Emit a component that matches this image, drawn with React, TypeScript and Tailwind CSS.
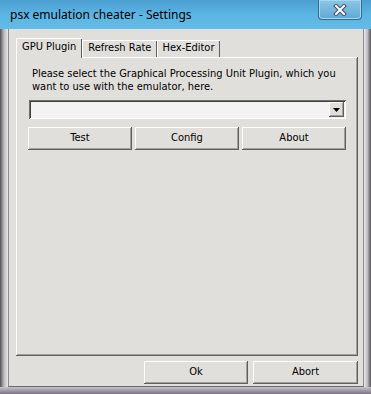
import React from "react";

const font = { fontFamily: '"DejaVu Sans Condensed", Tahoma, "Liberation Sans", sans-serif' };

const raised =
  "bg-[#e1dfdb] shadow-[inset_-1px_-1px_#5f5f5f,inset_1px_1px_#ffffff,inset_-2px_-2px_#a3a19d]";

function ClassicButton({ label }: { label: string }) {
  return (
    <button className={`${raised} w-full h-[23px] text-[11px] text-black flex items-center justify-center`}>
      {label}
    </button>
  );
}

function CloseGlyph() {
  return (
    <svg width="14" height="12" viewBox="0 0 14 12" aria-hidden="true">
      <path d="M3 2 L11 10 M11 2 L3 10" stroke="#3a4f66" strokeWidth="4" strokeLinecap="square" />
      <path d="M3 2 L11 10 M11 2 L3 10" stroke="#ffffff" strokeWidth="2" strokeLinecap="square" />
    </svg>
  );
}

export default function App() {
  return (
    <div
      className="w-[371px] h-[394px] flex flex-col overflow-hidden bg-[#cfcdd0]"
      style={font}
    >
      {/* Title bar */}
      <div className="h-[29px] flex items-start bg-gradient-to-b from-[#4b9fd0] via-[#5cb5e3] to-[#63bbe6]">
        <div
          className="pl-[10px] pt-[6px] text-[12px] text-black"
          style={{ fontFamily: '"Noto Sans", "Liberation Sans", sans-serif' }}
        >
          psx emulation cheater - Settings
        </div>
        <div className="ml-auto mr-[9px] w-[44px] h-[20px] rounded-b-[4px] border border-t-0 border-[#3d6a8c] bg-gradient-to-b from-[#8cc6e6] to-[#5da9d6] flex items-center justify-center shadow-[inset_0_0_0_1px_#a9d7ef]">
          <CloseGlyph />
        </div>
      </div>

      <div className="flex-1 flex">
        {/* left frame */}
        <div className="w-[8px] bg-gradient-to-r from-[#555357] via-[#bdbbbf] to-[#e9e8ea]" />

        {/* client area */}
        <div className="flex-1 flex flex-col bg-[#e1dfdb] border-l border-[#8d8b8e] border-r border-[#8d8b8e] border-b border-b-[#6b6870]">
          {/* tabs */}
          <div className="flex items-end pl-[7px] pt-[9px] text-[11px] text-black">
            <div className="h-[20px] px-[6px] flex items-center bg-[#e1dfdb] shadow-[inset_1px_1px_#ffffff,inset_-1px_0_#5f5f5f] relative z-10 -mb-[1px] pb-[1px]">
              GPU Plugin
            </div>
            <div className="h-[17px] px-[6px] flex items-center bg-[#e1dfdb] shadow-[inset_1px_1px_#ffffff,inset_-1px_0_#5f5f5f]">
              Refresh Rate
            </div>
            <div className="h-[17px] px-[5px] flex items-center bg-[#e1dfdb] shadow-[inset_1px_1px_#ffffff,inset_-1px_0_#5f5f5f]">
              Hex-Editor
            </div>
          </div>

          {/* tab panel */}
          <div className="ml-[7px] mr-[5px] h-[299px] bg-[#e1dfdb] shadow-[inset_-1px_-1px_#5f5f5f,inset_1px_1px_#ffffff,inset_-2px_-2px_#a3a19d] pt-[10px] px-[12px]">
            <p className="pl-[4px] text-[11px] leading-[13px] text-black">
              Please select the Graphical Processing Unit Plugin, which you want to use with the emulator, here.
            </p>
            <div className="mt-[7px] ml-[1px] h-[19px] flex bg-[#f3f3f3] shadow-[inset_1px_1px_#6f6f6f,inset_-1px_-1px_#ffffff,inset_2px_2px_#404040] p-[2px]">
              <div className="flex-1" />
              <div className={`${raised} w-[15px] h-[15px] flex items-center justify-center`}>
                <svg width="7" height="4" viewBox="0 0 7 4" aria-hidden="true">
                  <path d="M0 0 H7 L3.5 4 Z" fill="#000" />
                </svg>
              </div>
            </div>
            <div className="mt-[8px] grid grid-cols-3 gap-[3px]">
              <ClassicButton label="Test" />
              <ClassicButton label="Config" />
              <ClassicButton label="About" />
            </div>
          </div>

          {/* bottom buttons */}
          <div className="flex justify-end gap-[5px] mr-[5px] mt-[5px]">
            <div className="w-[104px]">
              <ClassicButton label="Ok" />
            </div>
            <div className="w-[105px]">
              <ClassicButton label="Abort" />
            </div>
          </div>
        </div>

        {/* right frame */}
        <div className="w-[7px] bg-gradient-to-r from-[#e9e8ea] via-[#bdbbbf] to-[#555357]" />
      </div>

      {/* bottom frame */}
      <div className="h-[7px] bg-gradient-to-b from-[#c8c4cc] to-[#7d7484]" />
    </div>
  );
}
